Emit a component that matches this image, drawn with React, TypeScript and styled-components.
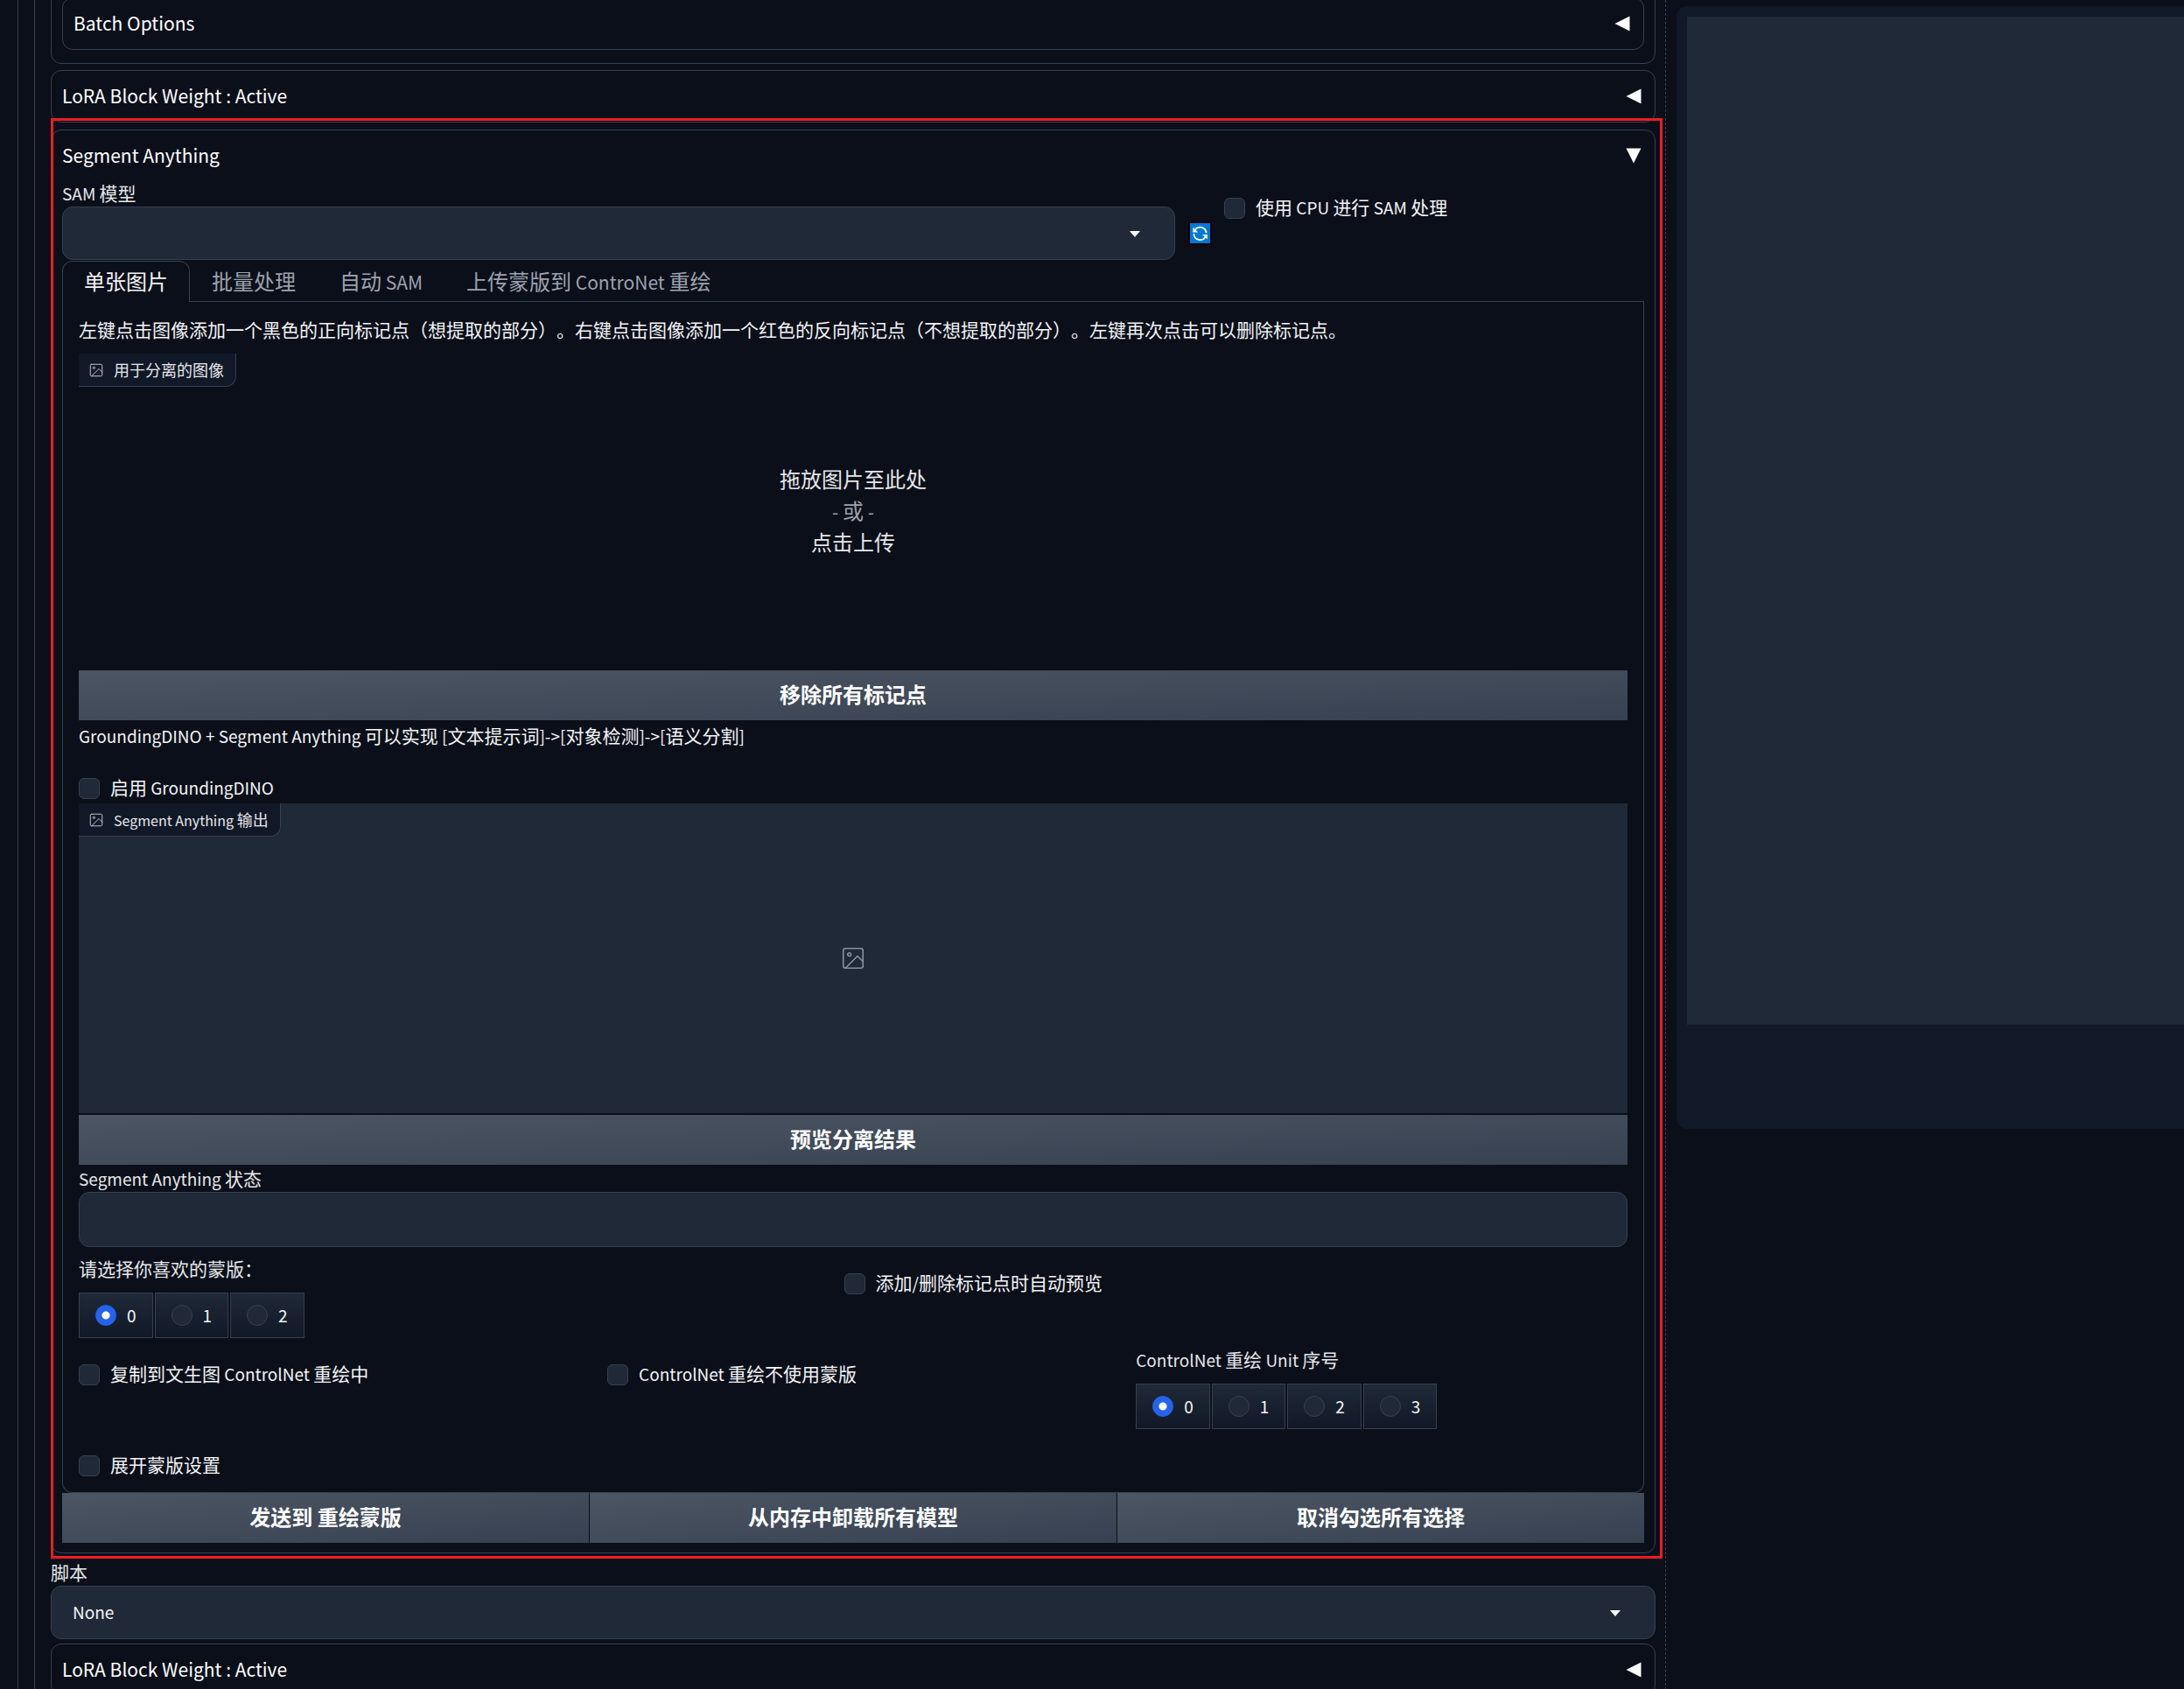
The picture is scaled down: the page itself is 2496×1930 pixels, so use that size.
import React, { useState } from "react";
import styled, { createGlobalStyle, css } from "styled-components";

const color = {
  page: "#0b0f19",
  line: "#374151",
  field: "#1f2937",
  panel: "#111827",
  text: "#f3f4f6",
  label: "#e5e7eb",
  muted: "#9ca3af",
  accent: "#2563eb",
  mark: "#ed1c24",
};

const GlobalStyle = createGlobalStyle`
  *, *::before, *::after { box-sizing: border-box; }
  body { margin: 0; background: ${color.page}; text-spacing-trim: space-all; }
  body, button, input, select {
    font-family: "Noto Sans CJK SC", "Noto Sans", sans-serif;
    font-size: 21px;
    color: ${color.text};
  }
  button { cursor: pointer; }
`;

const Page = styled.div`
  display: grid;
  grid-template-columns: minmax(0, 1904fr) minmax(0, 592fr);
  height: 100vh;
  overflow: hidden;
`;

const SettingsColumn = styled.main`
  display: flex;
  padding-left: 20px;
  border-right: 1px dashed ${color.line};
`;

const OuterFrame = styled.div`
  display: flex;
  flex: 1;
  min-width: 0;
  padding-left: 18px;
  border-left: 1px solid ${color.line};
`;

const InnerFrame = styled.div`
  flex: 1;
  min-width: 0;
  padding: 0 11px 0 18px;
  border-left: 1px solid ${color.line};
`;

const ClippedGroup = styled.section`
  margin: -16px 0 7px;
  padding: 12px 12px 15px;
  border: 1px solid ${color.line};
  border-radius: 12px;
`;

const AccordionBox = styled.section<{ $flush?: boolean }>`
  position: relative;
  margin-bottom: ${(p) => (p.$flush ? 0 : 8)}px;
  padding: 0 12px;
  border: 1px solid ${color.line};
  border-radius: 12px;
`;

const AccordionHeader = styled.button`
  display: flex;
  align-items: center;
  justify-content: space-between;
  width: 100%;
  height: 58px;
  padding: 0 3px 0 0;
  border: 0;
  background: none;
  color: #fff;
  font-size: 21px;
`;

const AccordionTitle = styled.span`
  padding-bottom: 2px;
`;

const AccordionBody = styled.div`
  padding-bottom: 11px;
`;

const Highlight = styled.div`
  position: absolute;
  inset: -14px -9px -7px -1px;
  border: 3px solid ${color.mark};
  pointer-events: none;
`;

const ModelRow = styled.div`
  display: grid;
  grid-template-columns: 53fr 56px 20fr;
`;

const ModelCheck = styled.div`
  padding-top: 15px;
`;

const Field = styled.div<{ $spaced?: boolean }>`
  display: flex;
  flex-direction: column;
  min-width: 0;
  margin-bottom: ${(p) => (p.$spaced ? 5 : 0)}px;
`;

const labelText = css`
  padding: 0 0 3px;
  color: ${color.label};
  font-size: 21px;
  line-height: 26px;
`;

const FieldLabel = styled.label`
  ${labelText}
`;

/* Latin runs are set a step smaller than the Chinese text round them. */
const Latin = styled.span<{ $size: number }>`
  font-size: ${(p) => p.$size}px;
  line-height: 1;
`;

const SelectWrap = styled.div`
  position: relative;
  display: flex;
`;

const boxedControl = css`
  width: 100%;
  border: 1px solid ${color.line};
  border-radius: 12px;
  background: ${color.field};
  padding: 0 24px 2px;
  font-size: 19px;
  outline: none;
`;

const Select = styled.select`
  ${boxedControl}
  height: 61px;
  appearance: none;
`;

const TextBox = styled.input`
  ${boxedControl}
  height: 63px;
`;

const Chevron = styled.svg`
  position: absolute;
  right: 40px;
  top: 28px;
  width: 12px;
  height: 7px;
  fill: #fff;
  pointer-events: none;
`;

const RefreshButton = styled.button`
  display: flex;
  align-items: center;
  justify-content: center;
  align-self: end;
  height: 61px;
  padding: 0;
  border: 0;
  background: none;
`;

const CheckLabel = styled.label<{ $inRow?: boolean }>`
  display: flex;
  align-items: center;
  gap: 12px;
  height: 31px;
  margin-top: ${(p) => (p.$inRow ? 15 : 0)}px;
`;

const CheckText = styled.span`
  padding-bottom: 2px;
  line-height: 29px;
`;

const Tick = styled.input`
  appearance: none;
  flex: none;
  width: 24px;
  height: 24px;
  margin: 0;
  border: 1px solid ${color.line};
  border-radius: 6px;
  background: ${color.field};
  &:checked {
    background: ${color.accent};
  }
`;

const TabList = styled.div`
  display: flex;
  margin-top: 1px;
  border-bottom: 1px solid ${color.line};
`;

const Tab = styled.button<{ $active: boolean }>`
  height: 47px;
  margin-bottom: -1px;
  padding: 0 24px 3px;
  border: 1px solid ${(p) => (p.$active ? color.line : "transparent")};
  border-bottom: 0;
  border-radius: 12px 12px 0 0;
  background: ${(p) => (p.$active ? color.page : "none")};
  color: ${(p) => (p.$active ? color.text : color.muted)};
  font-size: 24px;
  line-height: 36px;
`;

const TabPanel = styled.div`
  display: flex;
  flex-direction: column;
  gap: 2px;
  padding: 16px 18px 0;
  border: 1px solid ${color.line};
  border-top: 0;
  border-radius: 0 0 12px 12px;
`;

const Hint = styled.p<{ $after: number }>`
  margin: 0 0 ${(p) => p.$after}px;
  padding-bottom: 2px;
  line-height: 30px;
`;

const ImageBox = styled.div<{ $filled?: boolean }>`
  position: relative;
  display: flex;
  align-items: center;
  justify-content: center;
  height: ${(p) => (p.$filled ? 354 : 360)}px;
  background: ${(p) => (p.$filled ? color.field : "none")};
  color: ${color.muted};
`;

const ImageTag = styled.div`
  position: absolute;
  top: 0;
  left: 0;
  display: flex;
  align-items: center;
  gap: 11px;
  height: 38px;
  padding: 0 13px 0 11px;
  border: solid ${color.line};
  border-width: 0 1px 1px 0;
  border-radius: 0 0 12px 0;
  background: ${color.panel};
  color: ${color.label};
  font-size: 18px;
`;

const TagText = styled.span`
  padding-bottom: 2px;
`;

const DropZone = styled.button`
  display: flex;
  flex-direction: column;
  align-items: center;
  justify-content: center;
  width: 100%;
  height: 100%;
  padding: 0 0 3px;
  border: 0;
  background: none;
  color: ${color.label};
  font-size: 24px;
  line-height: 36px;
`;

const Or = styled.span`
  color: ${color.muted};
`;

const ActionButton = styled.button`
  flex: 1;
  min-height: 57px;
  padding: 0 0 3px;
  border: 0;
  background: linear-gradient(to bottom right, #4b5563, #374151);
  color: #fff;
  font-size: 24px;
  font-weight: 700;
  line-height: 36px;
`;

const ActionRow = styled.div`
  display: flex;
  gap: 1px;
`;

const OptionRow = styled.div<{ $columns: string; $last?: boolean }>`
  display: grid;
  grid-template-columns: ${(p) => p.$columns};
  align-items: start;
  min-height: ${(p) => (p.$last ? 70 : 0)}px;
  padding-top: 9px;
`;

const RadioSet = styled.fieldset`
  min-width: 0;
  margin: 0;
  padding: 0;
  border: 0;
`;

const RadioLegend = styled.legend`
  ${labelText}
  margin-bottom: 12px;
`;

const RadioRow = styled.div`
  display: flex;
  gap: 2px;
`;

const RadioChip = styled.label`
  display: flex;
  align-items: center;
  gap: 12px;
  height: 52px;
  padding: 0 18px;
  border: 1px solid ${color.line};
  background: linear-gradient(to top, ${color.panel}, ${color.field});
  font-size: 19px;
`;

const RadioText = styled.span`
  padding-bottom: 1px;
`;

const RadioDot = styled.input`
  appearance: none;
  width: 24px;
  height: 24px;
  margin: 0;
  border: 1px solid ${color.line};
  border-radius: 50%;
  background: ${color.field};
  &:checked {
    border-color: ${color.accent};
    background: radial-gradient(circle, #fff 4px, ${color.accent} 5px);
  }
`;

const OutputColumn = styled.aside`
  padding: 7px 0 0 12px;
`;

const GalleryPanel = styled.div`
  padding: 12px 0 119px 12px;
  border-radius: 12px 0 0 12px;
  background: ${color.panel};
`;

const GalleryImage = styled.div`
  height: 1152px;
  background: ${color.field};
`;

function Mixed({ text, size = 19 }: { text: string; size?: number }) {
  return (
    <>
      {text.split(/([\x20-\x7e]+)/).map((run, i) =>
        i % 2 === 1 ? (
          <Latin key={i} $size={size}>
            {run}
          </Latin>
        ) : (
          run
        ),
      )}
    </>
  );
}

function Triangle({ open }: { open?: boolean }) {
  return (
    <svg width="18" height="18" viewBox="0 0 18 18" fill="#fff" aria-hidden="true">
      <path d={open ? "M0.5 0.5H17.5L9 17.5Z" : "M17.5 0.5V17.5L0.5 9Z"} />
    </svg>
  );
}

function ImageIcon({ size }: { size: number }) {
  return (
    <svg
      width={size}
      height={size}
      viewBox="0 0 24 24"
      fill="none"
      stroke="currentColor"
      strokeWidth="1.3"
      strokeLinecap="round"
      strokeLinejoin="round"
      opacity="0.85"
      aria-hidden="true"
    >
      <rect x="3" y="3" width="18" height="18" rx="2" ry="2" />
      <circle cx="8.5" cy="8.5" r="1.5" />
      <polyline points="21 15 16 10 5 21" />
    </svg>
  );
}

function RefreshIcon() {
  return (
    <svg width="27" height="27" viewBox="0 0 27 27" aria-hidden="true">
      <rect width="27" height="27" fill="#000" />
      <rect x="2" y="2" width="23" height="23" fill="#0078d7" />
      <g fill="none" stroke="#fff" strokeWidth="1.8">
        <path d="M7.6 9.8A7.1 7.1 0 0 1 20.6 13.2" />
        <path d="M6.4 14.2A7.1 7.1 0 0 0 19.6 17.6" />
      </g>
      <path d="M5.4 6.8V12.4H11.2Z M21.8 20.6V15H16Z" fill="#fff" />
    </svg>
  );
}

function Accordion({ title, flush, children }: { title: string; flush?: boolean; children?: React.ReactNode }) {
  const open = Boolean(children);
  return (
    <AccordionBox $flush={flush}>
      <AccordionHeader type="button" aria-expanded={open}>
        <AccordionTitle>{title}</AccordionTitle>
        <Triangle open={open} />
      </AccordionHeader>
      {children}
    </AccordionBox>
  );
}

function Dropdown({ id, label, options, spaced }: { id: string; label: string; options: string[]; spaced?: boolean }) {
  return (
    <Field $spaced={spaced}>
      <FieldLabel htmlFor={id}>
        <Mixed text={label} />
      </FieldLabel>
      <SelectWrap>
        <Select id={id}>
          {options.map((o) => (
            <option key={o} value={o}>
              {o}
            </option>
          ))}
        </Select>
        <Chevron viewBox="0 0 12 7" aria-hidden="true">
          <path d="M0 0H12L6 7Z" />
        </Chevron>
      </SelectWrap>
    </Field>
  );
}

function Checkbox({ label, inRow }: { label: string; inRow?: boolean }) {
  return (
    <CheckLabel $inRow={inRow}>
      <Tick type="checkbox" />
      <CheckText>
        <Mixed text={label} />
      </CheckText>
    </CheckLabel>
  );
}

function Radios({ name, legend, count }: { name: string; legend: string; count: number }) {
  return (
    <RadioSet>
      <RadioLegend>
        <Mixed text={legend} />
      </RadioLegend>
      <RadioRow>
        {Array.from({ length: count }, (_, i) => (
          <RadioChip key={i}>
            <RadioDot type="radio" name={name} value={i} defaultChecked={i === 0} />
            <RadioText>{i}</RadioText>
          </RadioChip>
        ))}
      </RadioRow>
    </RadioSet>
  );
}

const TABS = ["单张图片", "批量处理", "自动 SAM", "上传蒙版到 ControNet 重绘"];

function SegmentAnything() {
  const [tab, setTab] = useState(0);
  return (
    <Accordion title="Segment Anything">
      <AccordionBody>
        <ModelRow>
          <Dropdown id="sam-model" label="SAM 模型" options={[""]} />
          <RefreshButton type="button" aria-label="刷新">
            <RefreshIcon />
          </RefreshButton>
          <ModelCheck>
            <Checkbox label="使用 CPU 进行 SAM 处理" />
          </ModelCheck>
        </ModelRow>
        <TabList role="tablist">
          {TABS.map((t, i) => (
            <Tab key={t} type="button" role="tab" aria-selected={i === tab} $active={i === tab} onClick={() => setTab(i)}>
              <Mixed text={t} size={21} />
            </Tab>
          ))}
        </TabList>
        <TabPanel role="tabpanel">
          <Hint $after={9}>
            左键点击图像添加一个黑色的正向标记点（想提取的部分）。右键点击图像添加一个红色的反向标记点（不想提取的部分）。左键再次点击可以删除标记点。
          </Hint>
          <ImageBox>
            <DropZone type="button">
              <span>拖放图片至此处</span>
              <Or>
                <Mixed text="- 或 -" size={21} />
              </Or>
              <span>点击上传</span>
            </DropZone>
            <ImageTag>
              <ImageIcon size={18} />
              <TagText>用于分离的图像</TagText>
            </ImageTag>
          </ImageBox>
          <ActionButton type="button">移除所有标记点</ActionButton>
          <Hint $after={26}>
            <Mixed text="GroundingDINO + Segment Anything 可以实现 [文本提示词]->[对象检测]->[语义分割]" />
          </Hint>
          <Checkbox label="启用 GroundingDINO" />
          <ImageBox $filled>
            <ImageTag>
              <ImageIcon size={18} />
              <TagText>
                <Mixed text="Segment Anything 输出" size={16} />
              </TagText>
            </ImageTag>
            <ImageIcon size={30} />
          </ImageBox>
          <ActionButton type="button">预览分离结果</ActionButton>
          <Field>
            <FieldLabel htmlFor="sam-status">
              <Mixed text="Segment Anything 状态" />
            </FieldLabel>
            <TextBox id="sam-status" type="text" readOnly />
          </Field>
          <OptionRow $columns="42fr 43fr">
            <Radios name="mask" legend="请选择你喜欢的蒙版：" count={3} />
            <Checkbox inRow label="添加/删除标记点时自动预览" />
          </OptionRow>
          <OptionRow $columns="100fr 100fr 93fr">
            <Checkbox inRow label="复制到文生图 ControlNet 重绘中" />
            <Checkbox inRow label="ControlNet 重绘不使用蒙版" />
            <Radios name="unit" legend="ControlNet 重绘 Unit 序号" count={4} />
          </OptionRow>
          <OptionRow $columns="1fr" $last>
            <Checkbox inRow label="展开蒙版设置" />
          </OptionRow>
        </TabPanel>
        <ActionRow>
          <ActionButton type="button">发送到 重绘蒙版</ActionButton>
          <ActionButton type="button">从内存中卸载所有模型</ActionButton>
          <ActionButton type="button">取消勾选所有选择</ActionButton>
        </ActionRow>
      </AccordionBody>
      <Highlight />
    </Accordion>
  );
}

export default function App() {
  return (
    <Page>
      <GlobalStyle />
      <SettingsColumn>
        <OuterFrame>
          <InnerFrame>
            <ClippedGroup>
              <Accordion title="Batch Options" flush />
            </ClippedGroup>
            <Accordion title="LoRA Block Weight : Active" />
            <SegmentAnything />
            <Dropdown id="script" label="脚本" options={["None"]} spaced />
            <Accordion title="LoRA Block Weight : Active" />
          </InnerFrame>
        </OuterFrame>
      </SettingsColumn>
      <OutputColumn>
        <GalleryPanel>
          <GalleryImage />
        </GalleryPanel>
      </OutputColumn>
    </Page>
  );
}
